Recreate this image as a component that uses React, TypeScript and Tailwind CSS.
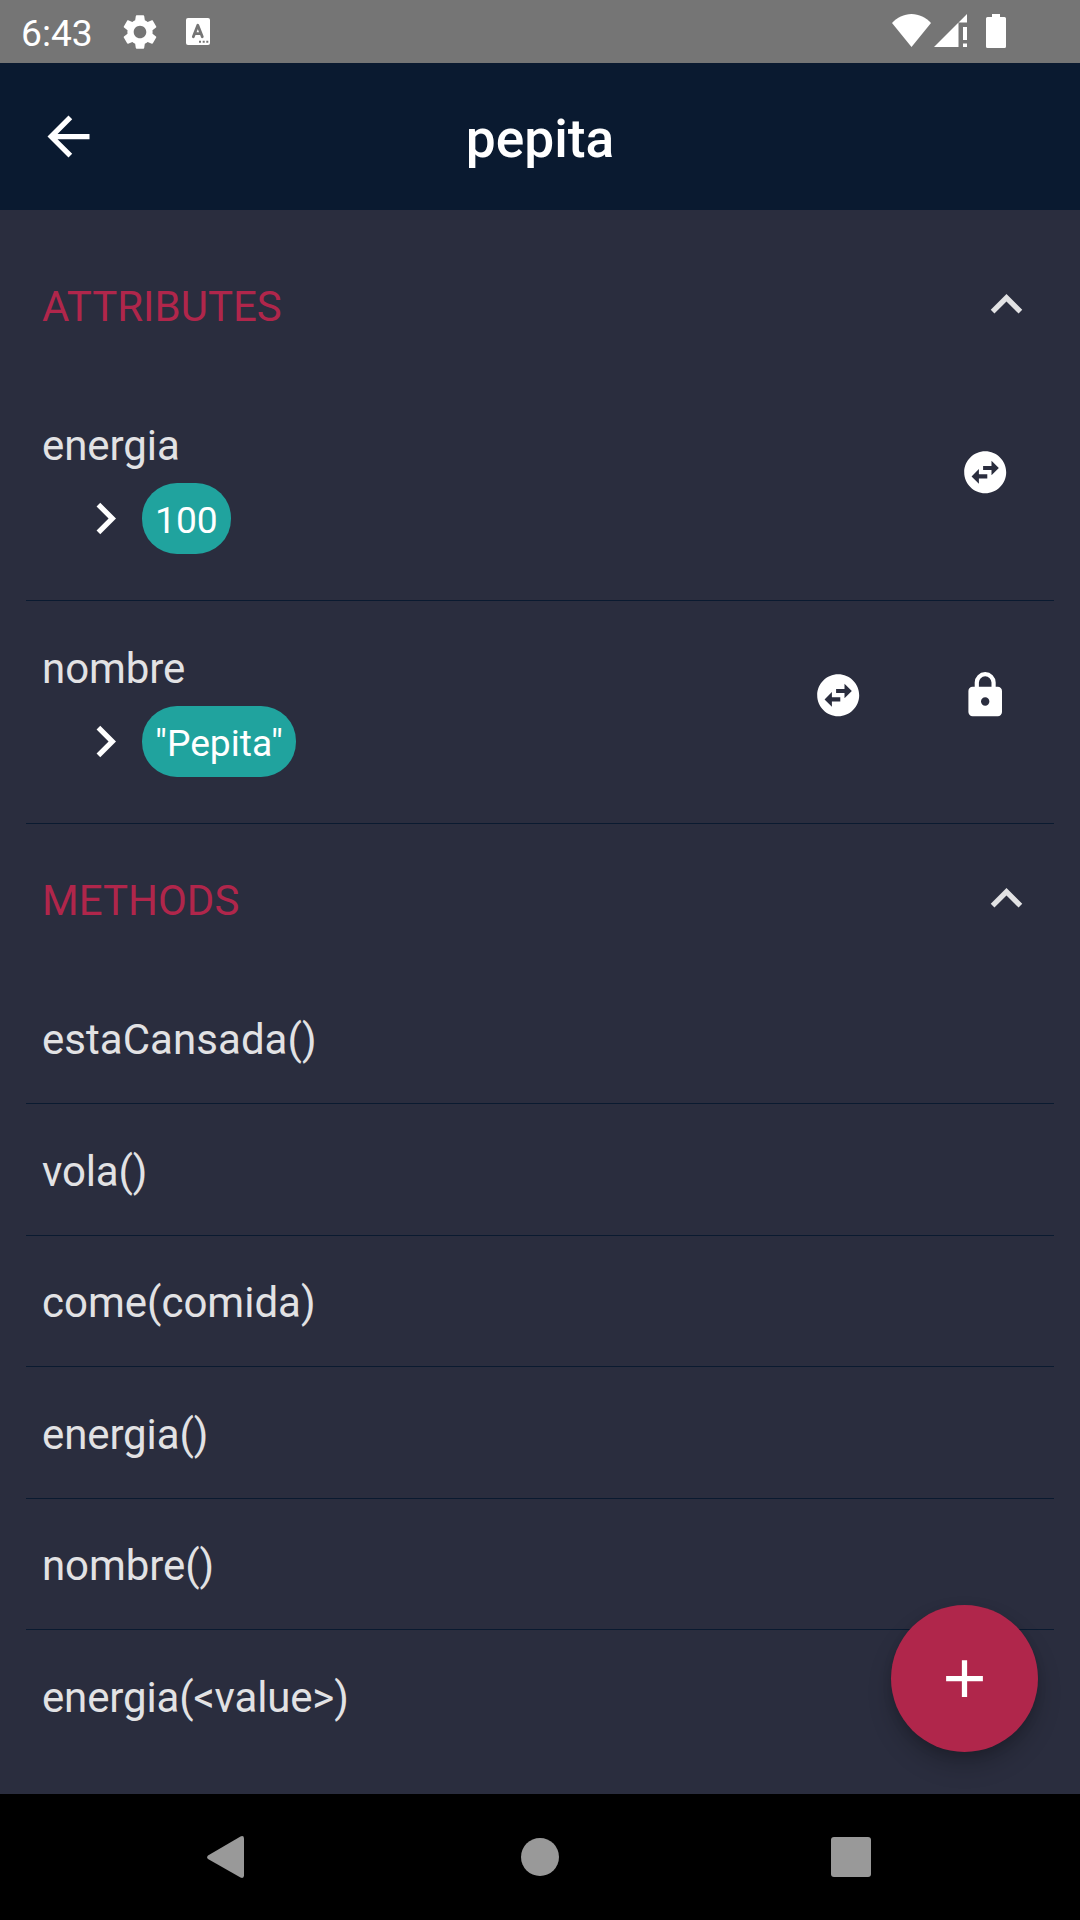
import React from "react";

const paths = {
  back: "M20 11H7.83l5.59-5.59L12 4l-8 8 8 8 1.41-1.41L7.83 13H20v-2z",
  up: "M12 8l-6 6 1.41 1.41L12 10.83l4.59 4.58L18 14z",
  right: "M10 6L8.59 7.41 13.17 12l-4.58 4.59L10 18l6-6z",
  plus: "M19 13h-6v6h-2v-6H5v-2h6V5h2v6h6v2z",
  swap: "M22 12c0-5.52-4.48-10-10-10S2 6.48 2 12s4.48 10 10 10 10-4.48 10-10zm-7-5.5l3.5 3.5-3.5 3.5V11h-4V9h4V6.5zm-6 11L5.5 14 9 10.5V13h4v2H9v2.5z",
  lock: "M12,17A2,2 0 0,0 14,15C14,13.89 13.1,13 12,13A2,2 0 0,0 10,15A2,2 0 0,0 12,17M18,8A2,2 0 0,1 20,10V20A2,2 0 0,1 18,22H6A2,2 0 0,1 4,20V10C4,8.89 4.9,8 6,8H7V6A5,5 0 0,1 12,1A5,5 0 0,1 17,6V8H18M12,3A3,3 0 0,0 9,6V8H15V6A3,3 0 0,0 12,3Z",
  gear: "M19.14 12.94c.04-.3.06-.61.06-.94 0-.32-.02-.64-.07-.94l2.03-1.58c.18-.14.23-.41.12-.61l-1.92-3.32c-.12-.22-.37-.29-.59-.22l-2.39.96c-.5-.38-1.03-.7-1.62-.94l-.36-2.54c-.04-.24-.24-.41-.48-.41h-3.84c-.24 0-.43.17-.47.41l-.36 2.54c-.59.24-1.13.57-1.62.94l-2.39-.96c-.22-.08-.47 0-.59.22L2.74 8.87c-.12.21-.08.47.12.61l2.03 1.58c-.05.3-.09.63-.09.94s.02.64.07.94l-2.03 1.58c-.18.14-.23.41-.12.61l1.92 3.32c.12.22.37.29.59.22l2.39-.96c.5.38 1.03.7 1.62.94l.36 2.54c.05.24.24.41.48.41h3.84c.24 0 .44-.17.47-.41l.36-2.54c.59-.24 1.13-.56 1.62-.94l2.39.96c.22.08.47 0 .59-.22l1.92-3.32c.12-.22.07-.47-.12-.61l-2.01-1.58zM12 15.6c-1.98 0-3.6-1.62-3.6-3.6s1.62-3.6 3.6-3.6 3.6 1.62 3.6 3.6-1.62 3.6-3.6 3.6z",
};

function Icon({ name, className }: { name: keyof typeof paths; className: string }) {
  return (
    <svg viewBox="0 0 24 24" fill="currentColor" className={`shrink-0 ${className}`}>
      <path d={paths[name]} />
    </svg>
  );
}

function StatusBar() {
  return (
    <div className="flex h-[63px] items-center bg-[#757575] pl-[21px] text-white">
      <span className="w-[98px] pt-[5px] text-[37.2px] leading-none">6:43</span>
      <Icon name="gear" className="size-[42px]" />
      <svg viewBox="0 0 24 27" className="ml-[25px] h-[27px] w-[24px]">
        <rect width="24" height="27" rx="2" fill="currentColor" />
        <path d="M7.300 18.800L11.800 7.300l4.500 11.500M9 15.700h5.600" fill="none" stroke="#757575" strokeWidth="2.8" strokeLinecap="round" strokeLinejoin="round" />
        <path d="M13 22.700h2v2h-2zM16.700 22.700h2v2h-2zM20.300 22.700h2v2h-2z" fill="#757575" />
      </svg>
      <svg viewBox="0 0 39 33" className="mt-[-2px] ml-auto h-[33px] w-[39px]" fill="currentColor">
        <path d="M19.500 33L0 9C5 3.500 12 0 19.500 0S34 3.500 39 9z" />
      </svg>
      <svg viewBox="0 0 33 33" className="mt-[-2px] ml-[3px] h-[33px] w-[33px]" fill="currentColor">
        <path d="M0 33L24.500 8.500V33zM33 0v8.500h-8.500zM29 13h4v13h-4zM29 29.500h4V33h-4z" />
      </svg>
      <svg viewBox="0 0 20 34" className="mr-[74px] mt-[-1px] ml-[19px] h-[34px] w-[20px]" fill="currentColor">
        <path d="M6 0h8v3h4.500a1.500 1.500 0 0 1 1.500 1.500v28a1.500 1.500 0 0 1-1.500 1.500h-17a1.500 1.500 0 0 1-1.500-1.500v-28A1.500 1.500 0 0 1 1.500 3H6z" />
      </svg>
    </div>
  );
}

function Section({ title, children }: { title: string; children: React.ReactNode }) {
  return (
    <section>
      <div className="flex h-[148px] items-center justify-between pr-[42px] pl-[42px]">
        <h2 className="pt-[4px] text-[42px] leading-[49px] text-[#b0264b]">{title}</h2>
        <Icon name="up" className="size-[63px] text-[#e2e2e4]" />
      </div>
      <div className="px-[26px]">{children}</div>
    </section>
  );
}

function Attribute({ name, value, locked }: { name: string; value: string; locked?: boolean }) {
  return (
    <div className="flex h-[223px] justify-between border-b border-[#0a1a30] pl-[16px]">
      <div className="pt-[43px]">
        <div className="text-[42px] leading-[49px] tracking-[-0.06px] text-[#e2e2e4]">{name}</div>
        <div className="mt-[13px] flex h-[71px] items-center pl-[32px] text-white">
          <Icon name="right" className="size-[63px]" />
          <span className="ml-[5px] h-[71px] rounded-[35px] bg-[#20a39e] px-[13px] pt-[2px] text-[37.2px] leading-[71px]">{value}</span>
        </div>
      </div>
      <div className="mr-[-5px] flex h-[188px] items-center text-white">
        <span className="flex w-[147px] justify-center">
          <Icon name="swap" className="size-[50.4px]" />
        </span>
        {locked && (
          <span className="flex w-[147px] justify-center">
            <Icon name="lock" className="size-[50.4px]" />
          </span>
        )}
      </div>
    </div>
  );
}

const methods = [
  { name: "estaCansada()", layout: "h-[132px] pt-[43px] tracking-[0.05px]" },
  { name: "vola()", layout: "h-[132px] pt-[43px] tracking-[-0.15px]" },
  { name: "come(comida)", layout: "h-[131px] pt-[42px]" },
  { name: "energia()", layout: "h-[132px] pt-[43px] tracking-[-0.12px]" },
  { name: "nombre()", layout: "h-[131px] pt-[42px] tracking-[-0.08px]" },
  { name: "energia(<value>)", layout: "h-[132px] pt-[43px] tracking-[-0.15px]" },
];

export default function App() {
  return (
    <div className="flex h-[1920px] w-[1080px] flex-col overflow-hidden bg-[#2a2d3e] font-[Roboto,sans-serif]">
      <StatusBar />
      <header className="flex h-[147px] items-center bg-[#0a1a30] px-[37px] text-white">
        <Icon name="back" className="size-[63px]" />
        <h1 className="mr-[63px] flex-1 pt-[4px] text-center text-[53.3px] leading-[62px] font-medium">pepita</h1>
      </header>
      <main className="relative h-[1584px] overflow-hidden pt-[20px]">
        <Section title="ATTRIBUTES">
          <Attribute name="energia" value="100" />
          <Attribute name="nombre" value={'"Pepita"'} locked />
        </Section>
        <Section title="METHODS">
          {methods.map(({ name, layout }) => (
            <div key={name} className={`${layout} border-b border-[#0a1a30] pl-[16px] text-[42px] leading-[49px] text-[#e2e2e4] last:border-0`}>
              {name}
            </div>
          ))}
        </Section>
        <button className="absolute right-[42px] bottom-[42px] flex size-[147px] items-center justify-center rounded-full bg-[#b0264b] text-white shadow-[0_14px_24px_rgba(0,0,0,0.2),0_4px_10px_rgba(0,0,0,0.12)]">
          <Icon name="plus" className="size-[63px]" />
        </button>
      </main>
      <nav className="flex h-[126px] items-center bg-black pl-[207px] text-[#999999]">
        <svg viewBox="0 0 37 42" className="h-[42px] w-[37px]" fill="currentColor">
          <path d="M1 19.500L33.500 .4Q37 -.8 37 2.500V39.500Q37 42.800 33.500 41.600L1 23Q-.6 21.200 1 19.500z" />
        </svg>
        <span className="ml-[277px] size-[38px] rounded-full bg-[#999999]" />
        <span className="ml-[272px] size-[40px] rounded-[3px] bg-[#999999]" />
      </nav>
    </div>
  );
}
